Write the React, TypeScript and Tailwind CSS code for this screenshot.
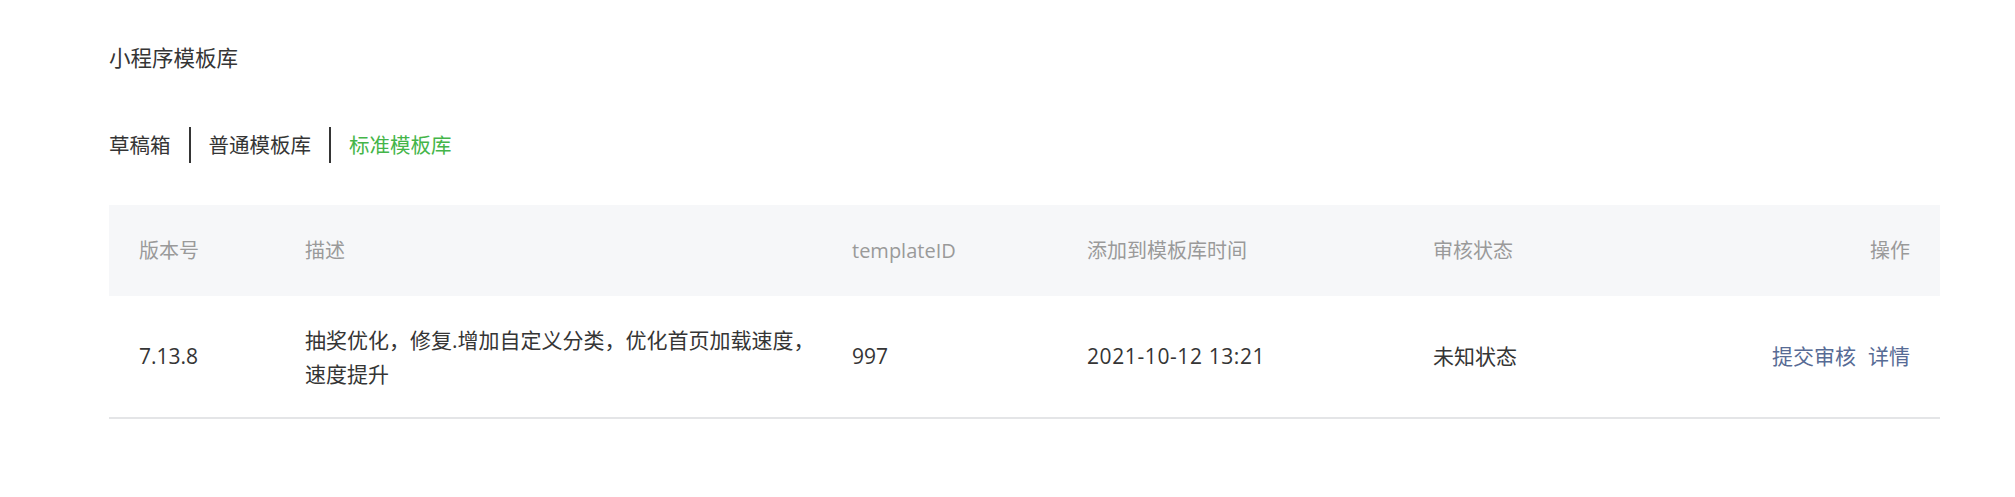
export default function App() {
  const tabs = ["草稿箱", "普通模板库", "标准模板库"];
  const active = 2;

  return (
    <div className="min-h-screen bg-white text-[#353535] font-['Open_Sans','Noto_Sans_CJK_SC',sans-serif] pl-[109px] pr-[75px] pt-[40px]">
      {/* Title */}
      <h1 className="text-[21.5px] leading-[36px] text-[#353535]">小程序模板库</h1>

      {/* Tabs */}
      <div className="mt-[51px] flex items-center text-[20.5px] leading-[36px]">
        {tabs.map((t, i) => (
          <div key={t} className="flex items-center">
            {i > 0 && <span className="mx-[18px] h-[36px] w-[2px] bg-[#353535]" />}
            <span className={i === active ? "text-[#44b549]" : "text-[#353535]"}>{t}</span>
          </div>
        ))}
      </div>

      {/* Table */}
      <div className="mt-[42px] w-[1831px]">
        <div className="grid grid-cols-[166px_547px_235px_346px_1fr_auto] items-center h-[91px] bg-[#f6f7f9] px-[30px] text-[20px] text-[#9a9a9a]">
          <div>版本号</div>
          <div>描述</div>
          <div>templateID</div>
          <div>添加到模板库时间</div>
          <div>审核状态</div>
          <div className="text-right">操作</div>
        </div>
        <div className="grid grid-cols-[166px_547px_235px_346px_1fr_auto] items-center h-[123px] px-[30px] border-b-2 border-[#e4e5e7] text-[21px] text-[#353535]">
          <div>7.13.8</div>
          <div className="pr-[22px] leading-[34px]">抽奖优化，修复.增加自定义分类，优化首页加载速度，速度提升</div>
          <div>997</div>
          <div className="tracking-[0.6px]">2021-10-12 13:21</div>
          <div>未知状态</div>
          <div className="flex gap-[12px] text-[#576b95]">
            <a href="#">提交审核</a>
            <a href="#">详情</a>
          </div>
        </div>
      </div>
    </div>
  );
}
